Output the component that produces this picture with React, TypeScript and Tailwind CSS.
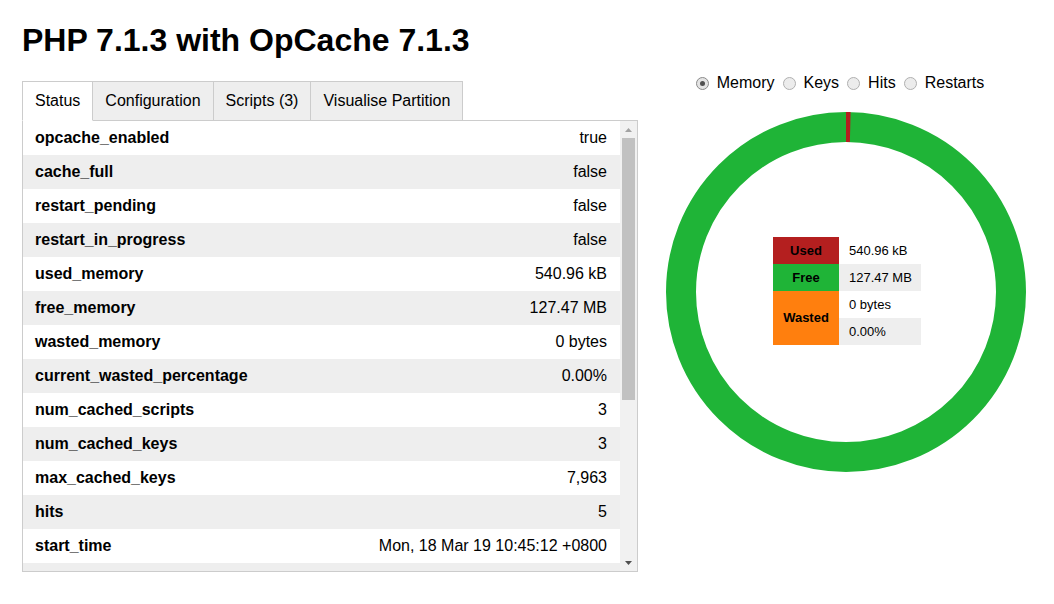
import React from 'react';

const stats: [string, string][] = [
  ['opcache_enabled', 'true'],
  ['cache_full', 'false'],
  ['restart_pending', 'false'],
  ['restart_in_progress', 'false'],
  ['used_memory', '540.96 kB'],
  ['free_memory', '127.47 MB'],
  ['wasted_memory', '0 bytes'],
  ['current_wasted_percentage', '0.00%'],
  ['num_cached_scripts', '3'],
  ['num_cached_keys', '3'],
  ['max_cached_keys', '7,963'],
  ['hits', '5'],
  ['start_time', 'Mon, 18 Mar 19 10:45:12 +0800'],
];

const tabs = ['Status', 'Configuration', 'Scripts (3)', 'Visualise Partition'];
const graphs = ['Memory', 'Keys', 'Hits', 'Restarts'];

const Radio: React.FC<{ checked?: boolean; label: string }> = ({ checked, label }) => (
  <label className="flex items-center gap-[8px]">
    <span
      className={`flex h-[13px] w-[13px] items-center justify-center rounded-full border ${
        checked ? 'border-[#8a8a8a] bg-[#e4e4e4]' : 'border-[#b0b0b0] bg-[#ececec]'
      }`}
    >
      {checked && <span className="h-[5px] w-[5px] rounded-full bg-[#505050]" />}
    </span>
    <span>{label}</span>
  </label>
);

const Donut = () => (
  <div className="relative h-[360px] w-[360px]">
    <svg className="absolute inset-0" width="360" height="360" viewBox="0 0 360 360">
      <circle cx="180" cy="180" r="165" fill="none" stroke="#1fb437" strokeWidth="30" />
      <path d="M180 0 L184.64 0.06 L183.87 30.05 L180 30 Z" fill="#b41f1f" />
    </svg>
    <div className="relative flex h-full items-center justify-center pb-[2px] pl-[2px]">
      <div className="grid grid-cols-[66px_82px] text-[13px] text-black">
        <div className="flex h-[27px] items-center justify-center bg-[#b41f1f] font-bold">Used</div>
        <div className="flex h-[27px] items-center bg-white pl-[10px]">540.96 kB</div>
        <div className="flex h-[27px] items-center justify-center bg-[#1fb437] font-bold">Free</div>
        <div className="flex h-[27px] items-center bg-[#eeeeee] pl-[10px]">127.47 MB</div>
        <div className="row-span-2 flex items-center justify-center bg-[#ff7f0e] font-bold">Wasted</div>
        <div className="flex h-[27px] items-center bg-white pl-[10px]">0 bytes</div>
        <div className="flex h-[27px] items-center bg-[#eeeeee] pl-[10px]">0.00%</div>
      </div>
    </div>
  </div>
);

const Scrollbar = () => (
  <div className="flex w-[17px] flex-col bg-[#f1f1f1]">
    <div className="flex h-[17px] items-center justify-center">
      <svg width="7" height="4" viewBox="0 0 7 4">
        <path d="M0 4 L3.5 0 L7 4 Z" fill="#a3a3a3" />
      </svg>
    </div>
    <div className="mx-[2px] h-[262px] bg-[#c1c1c1]" />
    <div className="flex-1" />
    <div className="flex h-[17px] items-center justify-center">
      <svg width="7" height="4" viewBox="0 0 7 4">
        <path d="M0 0 L7 0 L3.5 4 Z" fill="#505050" />
      </svg>
    </div>
  </div>
);

export default function App() {
  return (
    <div className="flex min-h-[604px] bg-white pl-[22px] font-['Liberation_Sans',Arial,sans-serif] text-black">
      <div className="w-[616px]">
        <h1 className="mt-[22px] mb-[22px] text-[32px] font-bold leading-[37px]">
          PHP 7.1.3 with OpCache 7.1.3
        </h1>

        <div className="relative z-10 -mb-px flex text-[16px]">
          {tabs.map((t, i) => (
            <div
              key={t}
              className={`flex h-[40px] items-center border-t border-r border-[#cccccc] px-3 ${
                i === 0 ? 'border-l border-b border-b-white bg-white' : 'border-b bg-[#eeeeee]'
              }`}
            >
              {t}
            </div>
          ))}
        </div>

        <div className="flex h-[452px] border border-[#cccccc]">
          <div className="flex-1 overflow-hidden">
            {stats.map(([k, v], i) => (
              <div
                key={k}
                className={`flex h-[34px] items-center justify-between px-3 text-[16px] ${
                  i % 2 === 1 ? 'bg-[#eeeeee]' : 'bg-white'
                }`}
              >
                <span className="font-bold">{k}</span>
                <span className="pr-px">{v}</span>
              </div>
            ))}
            <div className="h-[34px] bg-[#eeeeee]" />
          </div>
          <Scrollbar />
        </div>
      </div>

      <div className="flex flex-1 flex-col items-center pt-[74px]">
        <div className="mr-[12px] flex h-[18px] items-center gap-[8px] text-[16px]">
          {graphs.map((g, i) => (
            <Radio key={g} label={g} checked={i === 0} />
          ))}
        </div>
        <div className="mt-[20px]">
          <Donut />
        </div>
      </div>
    </div>
  );
}
